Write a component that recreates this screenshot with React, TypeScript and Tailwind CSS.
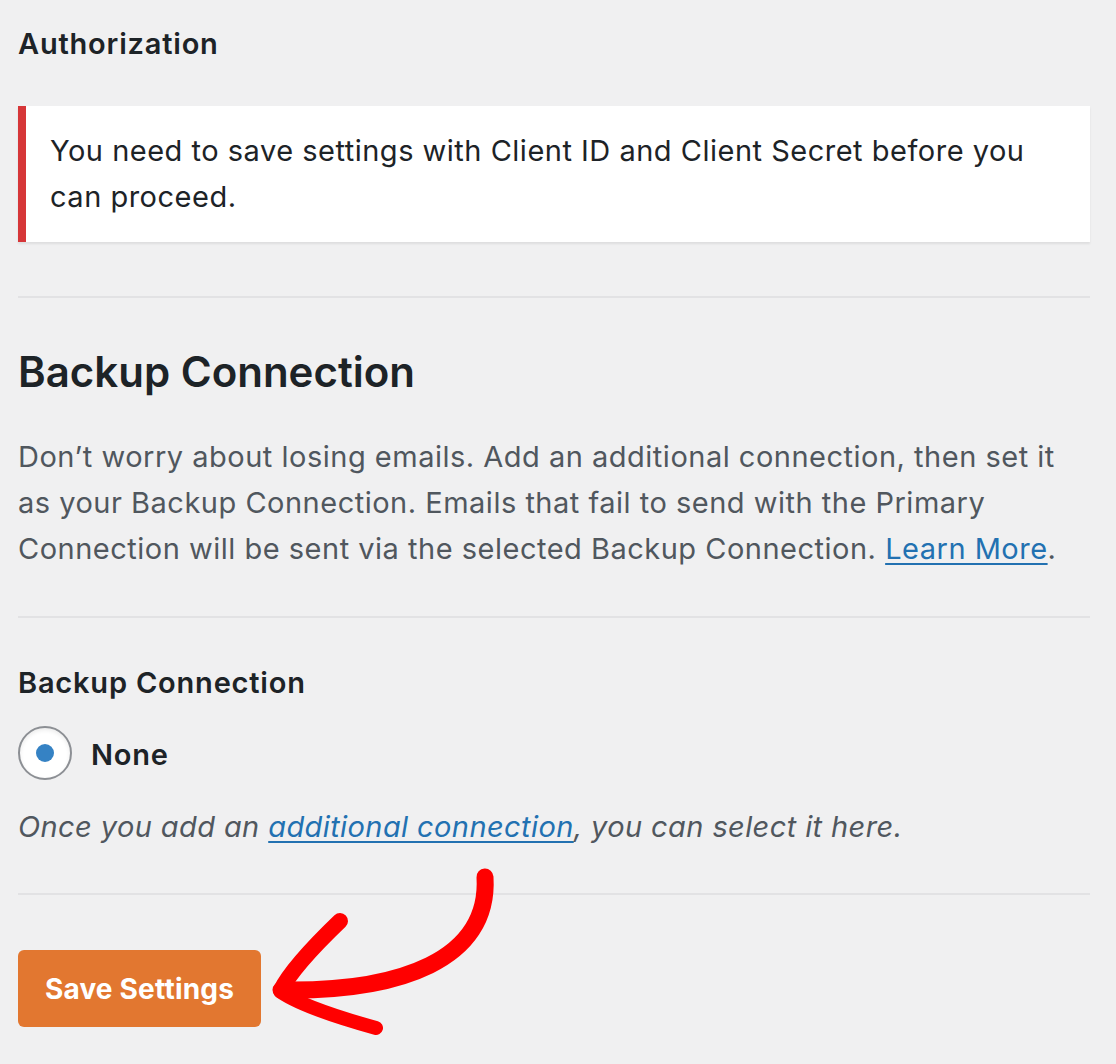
export default function App() {
  return (
    <div
      className="relative min-h-[1064px] w-[1116px] bg-[#f0f0f1] pl-[18px] pt-[24px] text-[#1d2327]"
      style={{ fontFamily: 'Inter, "Noto Sans", sans-serif' }}
    >
      <div className="flex w-[1072px] flex-col">
        <h3 className="text-[29px] font-semibold leading-[40px] tracking-[0.8px]">Authorization</h3>

        <div className="mt-[42px] flex h-[136px] items-center border-l-[8px] border-[#d63638] bg-white pl-[24px] pr-[24px] shadow-[0_2px_2px_rgba(0,0,0,0.08)]">
          <p className="text-[29px] leading-[46px] tracking-[0.5px] text-[#1d2327]">
            You need to save settings with Client ID and Client Secret before you can proceed.
          </p>
        </div>

        <div className="mt-[54px] h-[2px] bg-[#e2e2e4]" />

        <h2 className="mt-[48px] text-[42px] font-semibold leading-[52px]">Backup Connection</h2>

        <p className="mt-[36px] text-[29px] leading-[46px] tracking-[0.5px] text-[#50575e]">
          Don’t worry about losing emails. Add an additional connection, then set it as your Backup Connection.
          Emails that fail to send with the Primary Connection will be sent via the selected Backup Connection.{' '}
          <a href="#" className="text-[#2271b1] underline decoration-2 underline-offset-[4px]">
            Learn More
          </a>
          .
        </p>

        <div className="mt-[44px] h-[2px] bg-[#e2e2e4]" />

        <div className="mt-[45px] text-[29px] font-semibold leading-[40px] tracking-[0.8px]">Backup Connection</div>

        <label className="mt-[23px] flex items-center">
          <span className="flex h-[54px] w-[54px] items-center justify-center rounded-full border-2 border-[#8c8f94] bg-white shadow-[inset_0_2px_4px_rgba(0,0,0,0.08)]">
            <span className="h-[18px] w-[18px] rounded-full bg-[#3582c4]" />
          </span>
          <span className="ml-[19px] mt-[4px] text-[29px] font-semibold leading-[40px] tracking-[0.8px]">None</span>
        </label>

        <p className="mt-[27px] text-[29px] italic leading-[40px] tracking-[0.4px] text-[#50575e]">
          Once you add an{' '}
          <a href="#" className="text-[#2271b1] underline decoration-2 underline-offset-[4px]">
            additional connection
          </a>
          , you can select it here.
        </p>

        <div className="mt-[46px] h-[2px] bg-[#e2e2e4]" />

        <div className="mt-[55px]">
          <button className="h-[77px] w-[243px] rounded-[6px] bg-[#e27730] text-[28px] font-bold tracking-[0.2px] text-white">
            Save Settings
          </button>
        </div>
      </div>

      <svg
        className="pointer-events-none absolute left-0 top-0"
        width="1116"
        height="1064"
        viewBox="0 0 1116 1064"
      >
        <g fill="none" stroke="#ff0000" strokeLinecap="round" strokeLinejoin="round">
          <path d="M485 877 C490 960 400 992 281 990" strokeWidth="17" />
          <path d="M281 990 C291 970 315 945 340 921" strokeWidth="16" />
          <path d="M281 992 C300 1005 340 1018 376 1028" strokeWidth="14" />
        </g>
      </svg>
    </div>
  );
}
